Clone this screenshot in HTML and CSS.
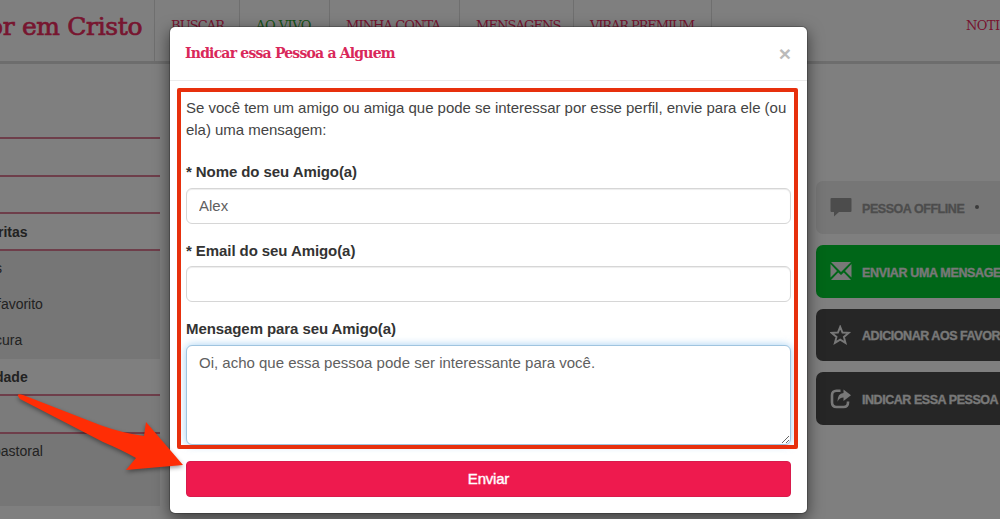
FILE: index.html
```html
<!DOCTYPE html>
<html lang="pt-BR">
<head>
    <meta charset="UTF-8">
    <meta name="viewport" content="width=device-width, initial-scale=1.0">
    <title>Indicar essa Pessoa a Alguem</title>
    <link rel="stylesheet" href="styles.css">
</head>
<body>

    <header class="topbar">
        <div class="brand">or em Cristo</div>
        <nav class="menu">
            <a class="menu-buscar">BUSCAR</a>
            <a class="menu-vivo">AO VIVO</a>
            <a class="menu-conta">MINHA CONTA</a>
            <a class="menu-mensagens">MENSAGENS</a>
            <a class="menu-premium">VIRAR PREMIUM</a>
        </nav>
        <div class="notice">NOTI</div>
    </header>

    <main class="page">
        <ul class="sidebar">
            <li class="heading"></li>
            <li class="heading"></li>
            <li class="heading"></li>
            <li class="heading cut-ritas">ritas</li>
            <li class="item cut-s">s</li>
            <li class="item cut-favorito">favorito</li>
            <li class="item cut-cura">cura</li>
            <li class="heading cut-dade">dade</li>
            <li class="heading shaded"></li>
            <li class="item cut-pastoral">pastoral</li>
            <li class="item"></li>
        </ul>

        <div class="actions">
            <div class="action offline">
                <svg width="22" height="20" viewBox="0 0 22 20"><path d="M1.500 1h19q1 0 1 1v12q0 1-1 1H9l-5 4.500V15H1.500q-1 0-1-1V2q0-1 1-1z" fill="currentColor"/></svg>
                <span>PESSOA OFFLINE</span><i class="dot"></i>
            </div>
            <div class="action send">
                <svg width="22" height="20" viewBox="0 0 22 20"><path d="M1 1h20L11 11zM0.500 3l6.500 7-6.500 6.500zM21.500 3v13.500L15 10zM1 19l7.200-7.600L11 14l2.800-2.600L21 19z" fill="currentColor"/></svg>
                <span>ENVIAR UMA MENSAGE</span>
            </div>
            <div class="action">
                <svg width="22" height="20" viewBox="0 0 22 20"><path d="M10.200 1.800l2.300 5.700 6.200.4-4.800 4 1.600 6-5.300-3.300-5.300 3.300 1.600-6-4.800-4 6.200-.4z" fill="none" stroke="currentColor" stroke-width="1.900"/></svg>
                <span>ADICIONAR AOS FAVOR</span>
            </div>
            <div class="action">
                <svg width="22" height="20" viewBox="0 0 22 20"><path d="M10.500 1.800H6.500Q2 1.800 2 6.300v7Q2 18 6.500 18h7q4.500 0 4.500-4.500v-1" fill="none" stroke="currentColor" stroke-width="2.600"/><path d="M13.500 0.500l7.500 5.700-7.500 5.900V8.500q-4 0-6 4.200 0-8.300 6-8.700z" fill="currentColor"/></svg>
                <span>INDICAR ESSA PESSOA</span>
            </div>
        </div>
    </main>

    <div class="backdrop"></div>

    <div class="modal">
        <div class="modal-header">
            <h4>Indicar essa Pessoa a Alguem</h4>
            <button class="close" type="button">&times;</button>
        </div>
        <form class="modal-body">
            <p class="intro">Se você tem um amigo ou amiga que pode se interessar por esse perfil, envie para ele (ou<br>ela) uma mensagem:</p>
            <div class="form-group">
                <label for="nome">* Nome do seu Amigo(a)</label>
                <input id="nome" type="text" value="Alex">
            </div>
            <div class="form-group">
                <label for="email">* Email do seu Amigo(a)</label>
                <input id="email" type="text">
            </div>
            <div class="form-group">
                <label for="mensagem">Mensagem para seu Amigo(a)</label>
                <textarea id="mensagem" class="active">Oi, acho que essa pessoa pode ser interessante para você.</textarea>
            </div>
            <button class="submit" type="button">Enviar</button>
        </form>
    </div>

    <!-- Highlight box and arrow -->
    <div class="highlight"></div>
    <svg class="arrow" width="190" height="100" viewBox="0 0 190 100">
        <path d="M18 15Q17 12 23 14L100 44Q122 52 144 55L146 41 183 84 126 89 136 77Q122 69 103 61L20 18z" fill="#ff2d05"/>
    </svg>

</body>
</html>
```

FILE: styles.css
```css
* {
    box-sizing: border-box;
}

body {
    margin: 0;
    height: 519px;
    overflow: hidden;
    position: relative;
    background: #fff;
    color: #444;
    font-family: "Liberation Sans", Arial, sans-serif;
    font-size: 15px;
}

/* Top bar */
.topbar {
    display: flex;
    height: 64px;
    border-bottom: 3px solid #dadada;
    font-family: "DejaVu Serif", serif;
    color: #ee2c5f;
    white-space: nowrap;
}

.brand {
    width: 155px;
    border-right: 1px solid #dedede;
    font-size: 25px;
    line-height: 53px;
    letter-spacing: -0.35px;
    text-indent: -12px;
    -webkit-text-stroke: 0.7px;
}

.menu {
    display: flex;
    font-size: 13px;
    line-height: 51px;
    letter-spacing: -0.9px;
}

.menu a {
    padding-left: 16px;
    border-right: 1px solid #dedede;
}

.menu-buscar {
    width: 85px;
}

.menu .menu-vivo {
    width: 90px;
    color: #30a530;
    letter-spacing: -0.5px;
}

.menu-conta {
    width: 130px;
}

.menu-mensagens {
    width: 114px;
}

.menu .menu-premium {
    width: 138px;
    letter-spacing: -1.1px;
}

.notice {
    margin-left: auto;
    width: 34px;
    font-size: 13px;
    line-height: 51px;
    letter-spacing: -0.6px;
}

/* Page behind the modal */
.page {
    display: flex;
    justify-content: space-between;
}

.sidebar {
    width: 160px;
    margin: 38px 0 0;
    padding: 0;
    list-style: none;
    font-size: 14px;
}

.sidebar li {
    height: 36px;
    line-height: 35px;
}

.sidebar .heading {
    height: 37.300px;
    line-height: 36px;
    border-bottom: 2px solid #dc7c95;
    font-weight: bold;
}

.sidebar .item {
    background: #ececec;
}

.sidebar .shaded {
    background: #f6f6f6;
}

.sidebar .cut-ritas {
    text-indent: -2px;
}

.sidebar .cut-s {
    text-indent: -5px;
}

.sidebar .cut-favorito {
    text-indent: -3px;
}

.sidebar .cut-cura,
.sidebar .cut-dade {
    text-indent: -5px;
}

.sidebar .cut-pastoral {
    text-indent: -7px;
}

.actions {
    display: flex;
    flex-direction: column;
    gap: 11px;
    width: 184px;
    padding-top: 117px;
}

.action {
    display: flex;
    align-items: center;
    height: 52.800px;
    padding-left: 14px;
    border-radius: 7px 0 0 7px;
    background: #4c4c4c;
    color: #f0f0f0;
    font-size: 12.500px;
    font-weight: bold;
    letter-spacing: -0.45px;
    white-space: nowrap;
    -webkit-text-stroke: 0.3px;
}

.action span {
    padding-top: 3px;
}

.action svg {
    flex: none;
    margin-right: 10px;
}

.action.offline {
    background: #ececec;
    color: #999;
}

.action.send {
    background: #00cc30;
    letter-spacing: -0.35px;
}

.dot {
    width: 4px;
    height: 4px;
    margin-left: 11px;
    border-radius: 50%;
    background: #777;
}

.backdrop {
    position: absolute;
    inset: 0;
    background: rgba(0, 0, 0, 0.5);
}

/* Modal */
.modal {
    position: absolute;
    top: 26px;
    left: 169px;
    width: 639px;
    height: 488px;
    padding-top: 1px;
    background: #fff;
    border: 1px solid rgba(0, 0, 0, 0.2);
    background-clip: padding-box;
    border-radius: 6px;
    box-shadow: 0 5px 15px rgba(0, 0, 0, 0.5);
}

.modal-header {
    display: flex;
    justify-content: space-between;
    align-items: center;
    height: 53px;
    padding: 0 16px 3px 15px;
    border-bottom: 1px solid #ebebeb;
}

.modal-header h4 {
    margin: 0;
    font-family: "DejaVu Serif", serif;
    font-size: 14px;
    letter-spacing: -0.8px;
    color: #d9285a;
}

.close {
    padding: 3px 0 0;
    border: 0;
    background: none;
    color: #bbb;
    font: bold 21px "Liberation Sans", Arial, sans-serif;
}

.modal-body {
    padding: 16px;
}

.intro {
    margin: 0 0 21px;
    line-height: 21.500px;
    letter-spacing: -0.03px;
    white-space: nowrap;
}

.form-group {
    margin-bottom: 16px;
}

.form-group label {
    display: block;
    margin-bottom: 5px;
    line-height: 21.500px;
    letter-spacing: -0.08px;
    font-weight: bold;
    color: #333;
}

.form-group input,
.form-group textarea {
    display: block;
    width: 100%;
    height: 36px;
    padding: 6px 12px;
    border: 1px solid #d6d6d6;
    border-radius: 6px;
    box-shadow: inset 0 1px 1px rgba(0, 0, 0, 0.075);
    color: #606060;
    font: 15px "Liberation Sans", Arial, sans-serif;
}

.form-group textarea {
    height: 100px;
    padding: 8px 12px;
}

.form-group .active {
    border-color: #9fc4df;
    box-shadow: 0 0 8px rgba(102, 175, 233, 0.6);
}

.submit {
    width: 100%;
    height: 36px;
    border: 1px solid #d81b4c;
    border-radius: 4px;
    background: #ee1a4e;
    color: #fff;
    font: 15px "Liberation Sans", Arial, sans-serif;
    letter-spacing: -0.2px;
    -webkit-text-stroke: 0.4px;
}

/* Annotations */
.highlight {
    position: absolute;
    top: 88px;
    left: 177px;
    width: 621px;
    height: 361px;
    border: 4px solid #e7300d;
    border-radius: 2px;
}

.arrow {
    position: absolute;
    top: 381px;
    left: 0;
    filter: drop-shadow(0 2px 2px rgba(0, 0, 0, 0.4));
}
```
